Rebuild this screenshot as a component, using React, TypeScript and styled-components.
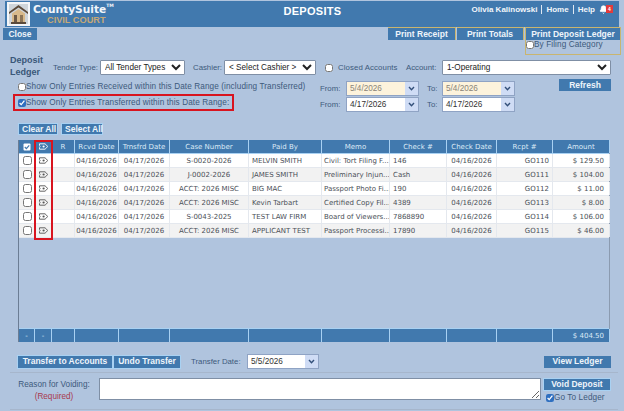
import { Bell } from "lucide-react";
import styled, { createGlobalStyle } from "styled-components";

const GlobalStyle = createGlobalStyle`
  html, body {
    margin: 0;
    padding: 0;
    background: #b0c4de;
  }
  * {
    box-sizing: border-box;
  }
`

const Page = styled.div`
  width: 624px;
  height: 411px;
  overflow: hidden;
  background: #b0c4de;
  color: #3d5a7c;
  font-family: "Liberation Sans", Arial, sans-serif;
  font-size: 8px;
  display: flex;
  flex-direction: column;
`

const Header = styled.header`
  height: 26px;
  margin: 1px 5px 0 5px;
  background: #4179ae;
  display: grid;
  grid-template-columns: 1fr auto 1fr;
  align-items: center;
  color: #fff;
`

const Brand = styled.div`
  display: flex;
  align-items: center;
  gap: 3px;
  padding-left: 2px;
`

const BrandText = styled.div`
  display: flex;
  flex-direction: column;
  line-height: 10px;
`

const BrandName = styled.div`
  font-family: "DejaVu Sans", sans-serif;
  font-size: 10.6px;
  font-weight: 700;
  color: #f2f6fb;
  line-height: 12px;
  sup {
    font-size: 4.5px;
    vertical-align: top;
    line-height: 6px;
  }
`

const BrandSub = styled.div`
  font-size: 9.2px;
  font-weight: 700;
  color: #c5a876;
  padding-left: 14px;
`

const Title = styled.div`
  font-size: 11px;
  font-weight: 700;
  letter-spacing: 0.3px;
  margin-left: 1px;
  margin-top: -6px;
`

const UserNav = styled.nav`
  display: flex;
  justify-content: flex-end;
  align-items: center;
  gap: 4px;
  padding-right: 6px;
  margin-top: -9px;
  font-weight: 700;
  font-size: 8px;
  a {
    color: #f2f6fb;
  }
`

const NavSep = styled.span`
  width: 1px;
  height: 9px;
  background: #dfe8f2;
`

const BellWrap = styled.span`
  position: relative;
  display: inline-flex;
  width: 14px;
  height: 10px;
`

const Badge = styled.span`
  position: absolute;
  right: 0;
  top: 0;
  width: 7px;
  height: 8px;
  background: #e23b3b;
  color: #fff;
  font-size: 5px;
  line-height: 8px;
  text-align: center;
`

const ActionBar = styled.div`
  display: flex;
  justify-content: space-between;
  align-items: flex-start;
  height: 28px;
  padding: 0 3px;
`

const Button = styled.button<{ $w?: number; $h?: number; $outlined?: boolean }>`
  width: ${p => (p.$w ? `${p.$w}px` : "auto")};
  height: ${p => p.$h || 13}px;
  padding: 0 3px;
  margin: 0;
  border: ${p => (p.$outlined ? "1px solid #a9d1f2" : "none")};
  background: #4179ae;
  color: #eef4fa;
  font-family: "Liberation Sans", Arial, sans-serif;
  font-size: 8.5px;
  font-weight: 700;
  line-height: 1;
  white-space: nowrap;
`

const CloseButton = styled(Button)`
  margin-top: 1px;
`

const PrintGroup = styled.div`
  display: flex;
  align-items: flex-start;
  gap: 1px;
`

const PrintCell = styled.div`
  border-top: 1px solid #c9b56f;
  border-right: 1px solid #c9b56f;
  display: flex;
  flex-direction: column;
`

const LedgerCell = styled(PrintCell)`
  border-left: 1px solid #c9b56f;
  border-bottom: 1px solid #c9b56f;
  height: 28px;
`

const InlineCheck = styled.label<{ $size?: number }>`
  display: flex;
  align-items: center;
  white-space: nowrap;
  font-size: ${p => p.$size || 8.2}px;
  letter-spacing: 0.1px;
  font-weight: 400;
  color: #3d5a7c;
  input {
    width: 8px;
    height: 8px;
    margin: 0;
    accent-color: #2f6fc0;
  }
`

const FilterRow = styled.div`
  display: flex;
  align-items: center;
  height: 24px;
  padding: 1px 13px 0 10px;
`

const LedgerLabel = styled.div`
  width: 43px;
  font-size: 9px;
  font-weight: 700;
  line-height: 12px;
  margin-top: -3px;
  color: #3a5778;
`

const FieldLabel = styled.span<{ $w?: number; $indent?: number }>`
  width: ${p => (p.$w ? `${p.$w}px` : "auto")};
  padding-left: ${p => p.$indent || 0}px;
  font-size: 7.8px;
  white-space: nowrap;
`

const Select = styled.select<{ $w?: number; $grow?: boolean }>`
  ${p => (p.$w ? `width: ${p.$w}px;` : "")}
  ${p => (p.$grow ? "flex: 1;" : "")}
  height: 15px;
  margin: 0;
  padding: 0;
  border: 1px solid #7f8fa5;
  border-radius: 1px;
  background: #fff;
  color: #222;
  font-family: "Liberation Sans", Arial, sans-serif;
  font-size: 8.2px;
`

const ClosedCheck = styled(InlineCheck)`
  width: 81px;
  margin-left: 9px;
  gap: 5px;
`

const DateFilters = styled.div`
  display: flex;
  height: 36px;
`

const ChecksColumn = styled.div`
  width: 320px;
  padding: 0 0 0 13px;
  display: flex;
  flex-direction: column;
`

const PlainCheck = styled.div`
  height: 15px;
  padding-left: 5px;
  display: flex;
  align-items: center;
`

const RedBox = styled.div`
  width: 221px;
  height: 17px;
  padding-left: 3px;
  display: flex;
  align-items: center;
  border: 2px solid #d8141f;
`

const DatesColumn = styled.div`
  width: 204px;
  padding-top: 2px;
  display: flex;
  flex-direction: column;
  gap: 1px;
`

const DateRow = styled.div`
  display: flex;
  align-items: center;
  height: 15px;
`

const DateBox = styled.div<{ $tinted?: boolean; $w?: number }>`
  width: ${p => p.$w || 73}px;
  height: 15px;
  display: flex;
  border: 1px solid #8fa3c4;
  background: ${p => (p.$tinted ? "#fdf3dc" : "#fff")};
  color: ${p => (p.$tinted ? "#8a8478" : "#333")};
  font-size: 8.2px;
  line-height: 13px;
`

const DateValue = styled.span`
  flex: 1;
  padding-left: 3px;
`

const DateArrow = styled.span`
  width: 13px;
  background: #cfdcf5;
  display: flex;
  align-items: center;
  justify-content: center;
`

const RefreshWrap = styled.div`
  flex: 1;
  display: flex;
  justify-content: flex-end;
  padding-right: 13px;
`

const ClearBar = styled.div`
  display: flex;
  gap: 3px;
  height: 17px;
  margin-top: 8px;
  padding-left: 18px;
  align-items: flex-start;
`

const Grid = styled.div`
  position: relative;
  width: 592px;
  height: 202px;
  margin-left: 18px;
  display: flex;
  flex-direction: column;
  border-left: 1px solid #6b7d94;
  border-right: 1px solid #8b9bb0;
`

const COLUMNS = "16px 17px 23px 44px 51px 79px 73px 68px 57px 50px 56px 57px"

const GridRow = styled.div<{ $alt?: boolean }>`
  display: grid;
  grid-template-columns: ${COLUMNS};
  height: 14px;
  background: ${p => (p.$alt ? "#f2f2f2" : "#fff")};
  border-bottom: 1px solid #e4e8ee;
  font-family: "DejaVu Sans", sans-serif;
  font-size: 7px;
  line-height: 14px;
  color: #4a4f57;
`

const HeadRow = styled(GridRow)`
  background: #4179ae;
  color: #dceaf6;
  border-bottom: 1px solid #a9d1f2;
`

const FootRow = styled(HeadRow)`
  border-bottom: none;
  border-top: 1px solid #a9d1f2;
  margin-top: auto;
`

const Cell = styled.div<{ $align?: string; $pad?: number }>`
  text-align: ${p => p.$align || "left"};
  padding: 0 ${p => p.$pad ?? 3}px;
  overflow: hidden;
  white-space: nowrap;
  border-right: 1px solid #e4e8ee;
  input {
    display: block;
    width: 9px;
    height: 9px;
    margin: 2px 0 0 4px;
  }
`

const HeadCell = styled(Cell)`
  text-align: center;
  border-right: 1px solid #a9d1f2;
  padding: 0;
`

const TotalCell = styled(HeadCell)`
  text-align: right;
  padding-right: 5px;
`

const IconCell = styled(Cell)`
  padding: 0;
  display: flex;
  align-items: center;
  justify-content: center;
`

const HeadIconCell = styled(HeadCell)`
  display: flex;
  align-items: center;
  justify-content: center;
`

const ColumnHighlight = styled.div`
  position: absolute;
  left: 15px;
  top: 0;
  width: 19px;
  height: 100px;
  border: 2px solid #d8141f;
  pointer-events: none;
`

const TransferBar = styled.div`
  display: flex;
  align-items: center;
  height: 15px;
  margin-top: 12px;
  padding: 0 13px 0 17px;
  gap: 10px;
`

const ButtonPair = styled.div`
  display: flex;
`

const Spacer = styled.div`
  flex: 1;
`

const TransferDate = styled.div`
  display: flex;
  align-items: center;
`

const VoidBar = styled.div`
  margin: 3px 6px 0 10px;
  padding: 5px 7px 0 7px;
  height: 38px;
  display: flex;
  gap: 2px;
  border-top: 1px solid #a6b6cc;
  border-bottom: 1px solid #a6b6cc;
`

const ReasonLabel = styled.div`
  width: 80px;
  text-align: center;
  padding: 1px 6px 0 0;
  font-size: 8.2px;
  line-height: 12px;
`

const Required = styled.div`
  color: #a83a4e;
`

const ReasonInput = styled.textarea`
  width: 442px;
  height: 22px;
  margin: 0;
  border: 1px solid #7f8fa5;
  background: #fff;
`

const VoidColumn = styled.div`
  display: flex;
  flex-direction: column;
  align-items: flex-start;
`

const GoToLedger = styled(InlineCheck)`
  padding-left: 3px;
  margin-top: 2px;
`

const CheckIcon = () => (
  <svg width="8" height="8" viewBox="0 0 8 8">
    <rect x="0.5" y="0.5" width="7" height="7" rx="1" fill="#fff" />
    <path d="M1.8 4 L3.4 5.6 L6.2 2.4" stroke="#4179ae" strokeWidth="1.2" fill="none" />
  </svg>
)

const EyeIcon = ({ color = "#555" }: { color?: string }) => (
  <svg width="9" height="7" viewBox="0 0 9 7">
    <path
      d="M0.5 0.8 H6 C7.2 1.6 8 2.6 8.5 3.5 C8 4.4 7.2 5.4 6 6.2 H0.5 V4.5 C1.3 4.1 1.3 2.9 0.5 2.5 Z"
      fill="none"
      stroke={color}
      strokeWidth="0.9"
    />
    <circle cx="4.6" cy="3.5" r="1.1" fill={color} />
  </svg>
)

const ArrowIcon = () => (
  <svg width="7" height="5" viewBox="0 0 7 5">
    <path d="M1 1 L3.5 3.8 L6 1" stroke="#33507a" strokeWidth="1.4" fill="none" />
  </svg>
)

const Logo = () => (
  <svg width="23" height="24" viewBox="0 0 23 24">
    <rect width="23" height="24" fill="#f4f6f8" />
    <rect x="2" y="2" width="19" height="20" fill="#cfd5da" />
    <path d="M2 10 L11.5 3 L21 10 V12 L11.5 5.5 L2 12 Z" fill="#5b4a3a" />
    <path d="M5 11.5 L11.5 7 L18 11.5 V21 H5 Z" fill="#d8b98a" />
    <rect x="7" y="13" width="3" height="8" fill="#6d5a46" />
    <rect x="13" y="13" width="3" height="8" fill="#8c7558" />
    <rect x="4" y="20" width="15" height="2" fill="#5b4a3a" />
  </svg>
)

type Entry = {
  received: string
  transferred: string
  caseNumber: string
  paidBy: string
  memo: string
  check: string
  receipt: string
  amount: string
}

const entries: Array<Entry> = [
  { received: "04/16/2026", transferred: "04/17/2026", caseNumber: "S-0020-2026", paidBy: "MELVIN SMITH", memo: "Civil: Tort Filing F...", check: "146", receipt: "GO110", amount: "$ 129.50" },
  { received: "04/16/2026", transferred: "04/17/2026", caseNumber: "J-0002-2026", paidBy: "JAMES SMITH", memo: "Preliminary Injun...", check: "Cash", receipt: "GO111", amount: "$ 104.00" },
  { received: "04/16/2026", transferred: "04/17/2026", caseNumber: "ACCT: 2026 MISC", paidBy: "BIG MAC", memo: "Passport Photo Fi...", check: "190", receipt: "GO112", amount: "$ 11.00" },
  { received: "04/16/2026", transferred: "04/17/2026", caseNumber: "ACCT: 2026 MISC", paidBy: "Kevin Tarbart", memo: "Certified Copy Fil...", check: "4389", receipt: "GO113", amount: "$ 8.00" },
  { received: "04/16/2026", transferred: "04/17/2026", caseNumber: "S-0043-2025", paidBy: "TEST LAW FIRM", memo: "Board of Viewers...", check: "7868890", receipt: "GO114", amount: "$ 106.00" },
  { received: "04/16/2026", transferred: "04/17/2026", caseNumber: "ACCT: 2026 MISC", paidBy: "APPLICANT TEST", memo: "Passport Processi...", check: "17890", receipt: "GO115", amount: "$ 46.00" },
]

const DateField = ({ value, tinted, w }: { value: string; tinted?: boolean; w?: number }) => (
  <DateBox $tinted={tinted} $w={w}>
    <DateValue>{value}</DateValue>
    <DateArrow>
      <ArrowIcon />
    </DateArrow>
  </DateBox>
)

const DateRange = ({ value, tinted }: { value: string; tinted?: boolean }) => (
  <DateRow>
    <FieldLabel $w={26}>From:</FieldLabel>
    <DateField value={value} tinted={tinted} />
    <FieldLabel $w={23} $indent={8}>To:</FieldLabel>
    <DateField value={value} tinted={tinted} />
  </DateRow>
)

export default function App() {
  return (
    <Page>
      <GlobalStyle />
      <Header>
        <Brand>
          <Logo />
          <BrandText>
            <BrandName>
              CountySuite<sup>TM</sup>
            </BrandName>
            <BrandSub>CIVIL COURT</BrandSub>
          </BrandText>
        </Brand>
        <Title>DEPOSITS</Title>
        <UserNav>
          <a>Olivia Kalinowski</a>
          <NavSep />
          <a>Home</a>
          <NavSep />
          <a>Help</a>
          <BellWrap>
            <Bell size={9} color="#fff" fill="#fff" />
            <Badge>4</Badge>
          </BellWrap>
        </UserNav>
      </Header>

      <ActionBar>
        <CloseButton $w={34} $h={12}>Close</CloseButton>
        <PrintGroup>
          <PrintCell>
            <Button $w={67} $h={12}>Print Receipt</Button>
          </PrintCell>
          <PrintCell>
            <Button $w={66} $h={12}>Print Totals</Button>
          </PrintCell>
          <LedgerCell>
            <Button $w={94} $h={12}>Print Deposit Ledger</Button>
            <InlineCheck>
              <input type="checkbox" />
              By Filing Category
            </InlineCheck>
          </LedgerCell>
        </PrintGroup>
      </ActionBar>

      <FilterRow>
        <LedgerLabel>
          Deposit
          <br />
          Ledger
        </LedgerLabel>
        <FieldLabel $w={47}>Tender Type:</FieldLabel>
        <Select $w={85} defaultValue="all">
          <option value="all">All Tender Types</option>
        </Select>
        <FieldLabel $w={39} $indent={8}>Cashier:</FieldLabel>
        <Select $w={92} defaultValue="none">
          <option value="none">&lt; Select Cashier &gt;</option>
        </Select>
        <ClosedCheck $size={7.8}>
          <input type="checkbox" />
          Closed Accounts
        </ClosedCheck>
        <FieldLabel $w={36}>Account:</FieldLabel>
        <Select $grow defaultValue="1">
          <option value="1">1-Operating</option>
        </Select>
      </FilterRow>

      <DateFilters>
        <ChecksColumn>
          <PlainCheck>
            <InlineCheck>
              <input type="checkbox" />
              Show Only Entries Received within this Date Range (including Transferred)
            </InlineCheck>
          </PlainCheck>
          <RedBox>
            <InlineCheck>
              <input type="checkbox" defaultChecked />
              Show Only Entries Transferred within this Date Range:
            </InlineCheck>
          </RedBox>
        </ChecksColumn>
        <DatesColumn>
          <DateRange value="5/4/2026" tinted />
          <DateRange value="4/17/2026" />
        </DatesColumn>
        <RefreshWrap>
          <Button $w={52} $h={12}>Refresh</Button>
        </RefreshWrap>
      </DateFilters>

      <ClearBar>
        <Button $w={40} $h={12} $outlined>Clear All</Button>
        <Button $w={42} $h={12} $outlined>Select All</Button>
      </ClearBar>

      <Grid>
        <HeadRow>
          <HeadIconCell><CheckIcon /></HeadIconCell>
          <HeadIconCell><EyeIcon color="#fff" /></HeadIconCell>
          <HeadCell>R</HeadCell>
          <HeadCell>Rcvd Date</HeadCell>
          <HeadCell>Trnsfrd Date</HeadCell>
          <HeadCell>Case Number</HeadCell>
          <HeadCell>Paid By</HeadCell>
          <HeadCell>Memo</HeadCell>
          <HeadCell>Check #</HeadCell>
          <HeadCell>Check Date</HeadCell>
          <HeadCell>Rcpt #</HeadCell>
          <HeadCell>Amount</HeadCell>
        </HeadRow>
        {entries.map((e, i) => (
          <GridRow key={e.receipt} $alt={i % 2 === 1}>
            <Cell $pad={0}><input type="checkbox" /></Cell>
            <IconCell><EyeIcon /></IconCell>
            <Cell />
            <Cell $align="center" $pad={0}>{e.received}</Cell>
            <Cell $align="center" $pad={0}>{e.transferred}</Cell>
            <Cell $align="center" $pad={0}>{e.caseNumber}</Cell>
            <Cell>{e.paidBy}</Cell>
            <Cell $pad={2}>{e.memo}</Cell>
            <Cell>{e.check}</Cell>
            <Cell $align="center" $pad={0}>{e.received}</Cell>
            <Cell $align="right">{e.receipt}</Cell>
            <Cell $align="right" $pad={5}>{e.amount}</Cell>
          </GridRow>
        ))}
        <FootRow>
          <HeadCell>-</HeadCell>
          <HeadCell>-</HeadCell>
          <HeadCell />
          <HeadCell />
          <HeadCell />
          <HeadCell />
          <HeadCell />
          <HeadCell />
          <HeadCell />
          <HeadCell />
          <HeadCell />
          <TotalCell>$ 404.50</TotalCell>
        </FootRow>
        <ColumnHighlight />
      </Grid>

      <TransferBar>
        <ButtonPair>
          <Button $w={96} $h={14} $outlined>Transfer to Accounts</Button>
          <Button $w={68} $h={14} $outlined>Undo Transfer</Button>
        </ButtonPair>
        <TransferDate>
          <FieldLabel $w={56}>Transfer Date:</FieldLabel>
          <DateField value="5/5/2026" w={72} />
        </TransferDate>
        <Spacer />
        <Button $w={67} $h={12}>View Ledger</Button>
      </TransferBar>

      <VoidBar>
        <ReasonLabel>
          Reason for Voiding:
          <Required>(Required)</Required>
        </ReasonLabel>
        <ReasonInput />
        <VoidColumn>
          <Button $w={68} $h={13} $outlined>Void Deposit</Button>
          <GoToLedger>
            <input type="checkbox" defaultChecked />
            Go To Ledger
          </GoToLedger>
        </VoidColumn>
      </VoidBar>
    </Page>
  )
}
